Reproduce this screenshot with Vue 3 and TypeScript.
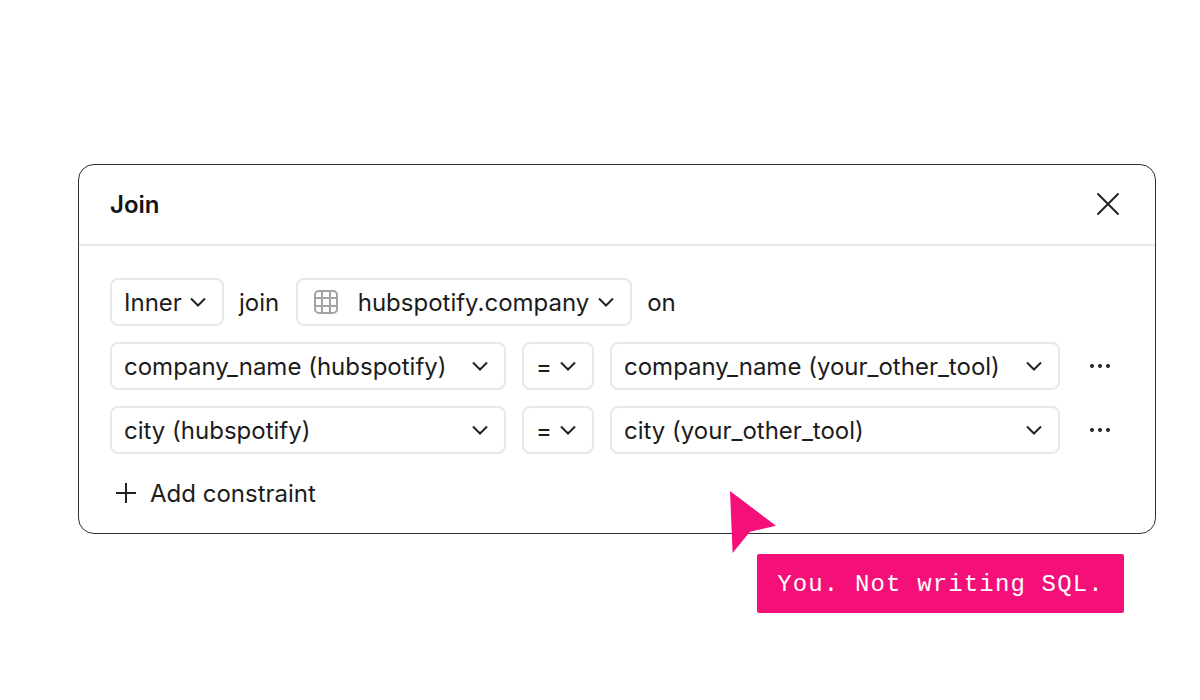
<script setup lang="ts">
interface Constraint { left: string; right: string }
const constraints: Constraint[] = [
  { left: 'company_name (hubspotify)', right: 'company_name (your_other_tool)' },
  { left: 'city (hubspotify)', right: 'city (your_other_tool)' },
]
</script>

<template>
  <main class="page">
    <section class="card">
      <header class="head">
        <h1 class="title">Join</h1>
        <svg class="close" width="26" height="26" viewBox="0 0 26 26" fill="none" stroke="#222" stroke-width="2">
          <path d="M2.5 2.5 23.5 23.5M23.5 2.5 2.5 23.5" />
        </svg>
      </header>
      <div class="body">
        <div class="row">
          <div class="sel inner">
            <span>Inner</span>
            <svg class="chev" viewBox="0 0 18 10" fill="none"><path d="M2 1.5 9 8.5 16 1.5" /></svg>
          </div>
          <span class="word join">join</span>
          <div class="sel table">
            <svg class="grid" width="24" height="24" viewBox="0 0 24 24" fill="none" stroke="#a3a3a3" stroke-width="2">
              <rect x="1" y="1" width="22" height="22" rx="4" />
              <path d="M8 1V23M16 1V23M1 8H23M1 16H23" />
            </svg>
            <span>hubspotify.company</span>
            <svg class="chev" viewBox="0 0 18 10" fill="none"><path d="M2 1.5 9 8.5 16 1.5" /></svg>
          </div>
          <span class="word on">on</span>
        </div>
        <div v-for="c in constraints" :key="c.left" class="row">
          <div class="sel left">
            <span>{{ c.left }}</span>
            <svg class="chev" viewBox="0 0 18 10" fill="none"><path d="M2 1.5 9 8.5 16 1.5" /></svg>
          </div>
          <div class="sel op">
            <span>=</span>
            <svg class="chev" viewBox="0 0 18 10" fill="none"><path d="M2 1.5 9 8.5 16 1.5" /></svg>
          </div>
          <div class="sel right">
            <span>{{ c.right }}</span>
            <svg class="chev" viewBox="0 0 18 10" fill="none"><path d="M2 1.5 9 8.5 16 1.5" /></svg>
          </div>
          <svg class="more" width="22" height="6" viewBox="0 0 22 6" fill="#222">
            <circle cx="3" cy="3" r="2" /><circle cx="11" cy="3" r="2" /><circle cx="19" cy="3" r="2" />
          </svg>
        </div>
        <div class="add">
          <svg width="20" height="20" viewBox="0 0 20 20" fill="none" stroke="#222" stroke-width="2">
            <path d="M10 0V20M0 10H20" />
          </svg>
          <span>Add constraint</span>
        </div>
      </div>
      <svg class="cursor" width="48" height="62" viewBox="0 0 48 62">
        <path d="M1 0 47 34.7 21 40.7 3.6 62Z" fill="#f50f78" />
      </svg>
      <div class="tip">You. Not writing SQL.</div>
    </section>
  </main>
</template>

<style>
html, body { background: #fff; }
</style>

<style scoped>
.page {
  width: 1200px;
  height: 700px;
  box-sizing: border-box;
  padding: 164px 0 0 78px;
  overflow: hidden;
  background: #fff;
  font-family: Inter, "Liberation Sans", sans-serif;
  color: #1c1c1c;
  font-size: 24px;
}
.card {
  position: relative;
  width: 1078px;
  height: 370px;
  box-sizing: border-box;
  border: 1px solid #2e3133;
  border-radius: 16px;
}
.head {
  height: 81px;
  box-sizing: border-box;
  border-bottom: 2px solid #e8e8e8;
  padding: 0 34px 0 31px;
  display: flex;
  align-items: center;
  justify-content: space-between;
}
.title {
  margin: 0;
  font-size: 24px;
  font-weight: 600;
  color: #141414;
}
.close { margin-top: -2px; }
.body {
  padding: 32px 0 0 31px;
  display: flex;
  flex-direction: column;
  gap: 16px;
}
.row {
  display: flex;
  align-items: center;
  height: 48px;
}
.sel {
  height: 48px;
  box-sizing: border-box;
  border: 2px solid #e8e8e8;
  border-radius: 8px;
  padding: 0 15px 0 12px;
  display: flex;
  align-items: center;
  justify-content: space-between;
  white-space: nowrap;
}
.chev {
  width: 18px;
  height: 10px;
  flex: none;
}
.chev path {
  stroke: #222;
  stroke-width: 2;
}
.inner { width: 114px; }
.word.join { margin: 0 17px 0 15px; }
.table { width: 336px; justify-content: flex-start; }
.table .grid { flex: none; margin: 0 19.5px 0 4px; }
.table .chev { margin-left: 7.5px; }
.word.on { margin-left: 15px; }
.left { width: 396px; }
.op { width: 72px; margin: 0 16px; }
.right { width: 450px; }
.more { margin-left: 29px; }
.add {
  display: flex;
  align-items: center;
  gap: 14px;
  padding-left: 6px;
  height: 48px;
  margin-top: -1px;
}
.cursor {
  position: absolute;
  left: 650px;
  top: 326px;
}
.tip {
  position: absolute;
  left: 678px;
  top: 389px;
  width: 367px;
  height: 59px;
  background: #f50f78;
  border-radius: 2px;
  color: #fff;
  font-family: "Liberation Mono", monospace;
  font-size: 24px;
  letter-spacing: 1.15px;
  line-height: 61px;
  text-align: center;
  white-space: nowrap;
}
</style>
